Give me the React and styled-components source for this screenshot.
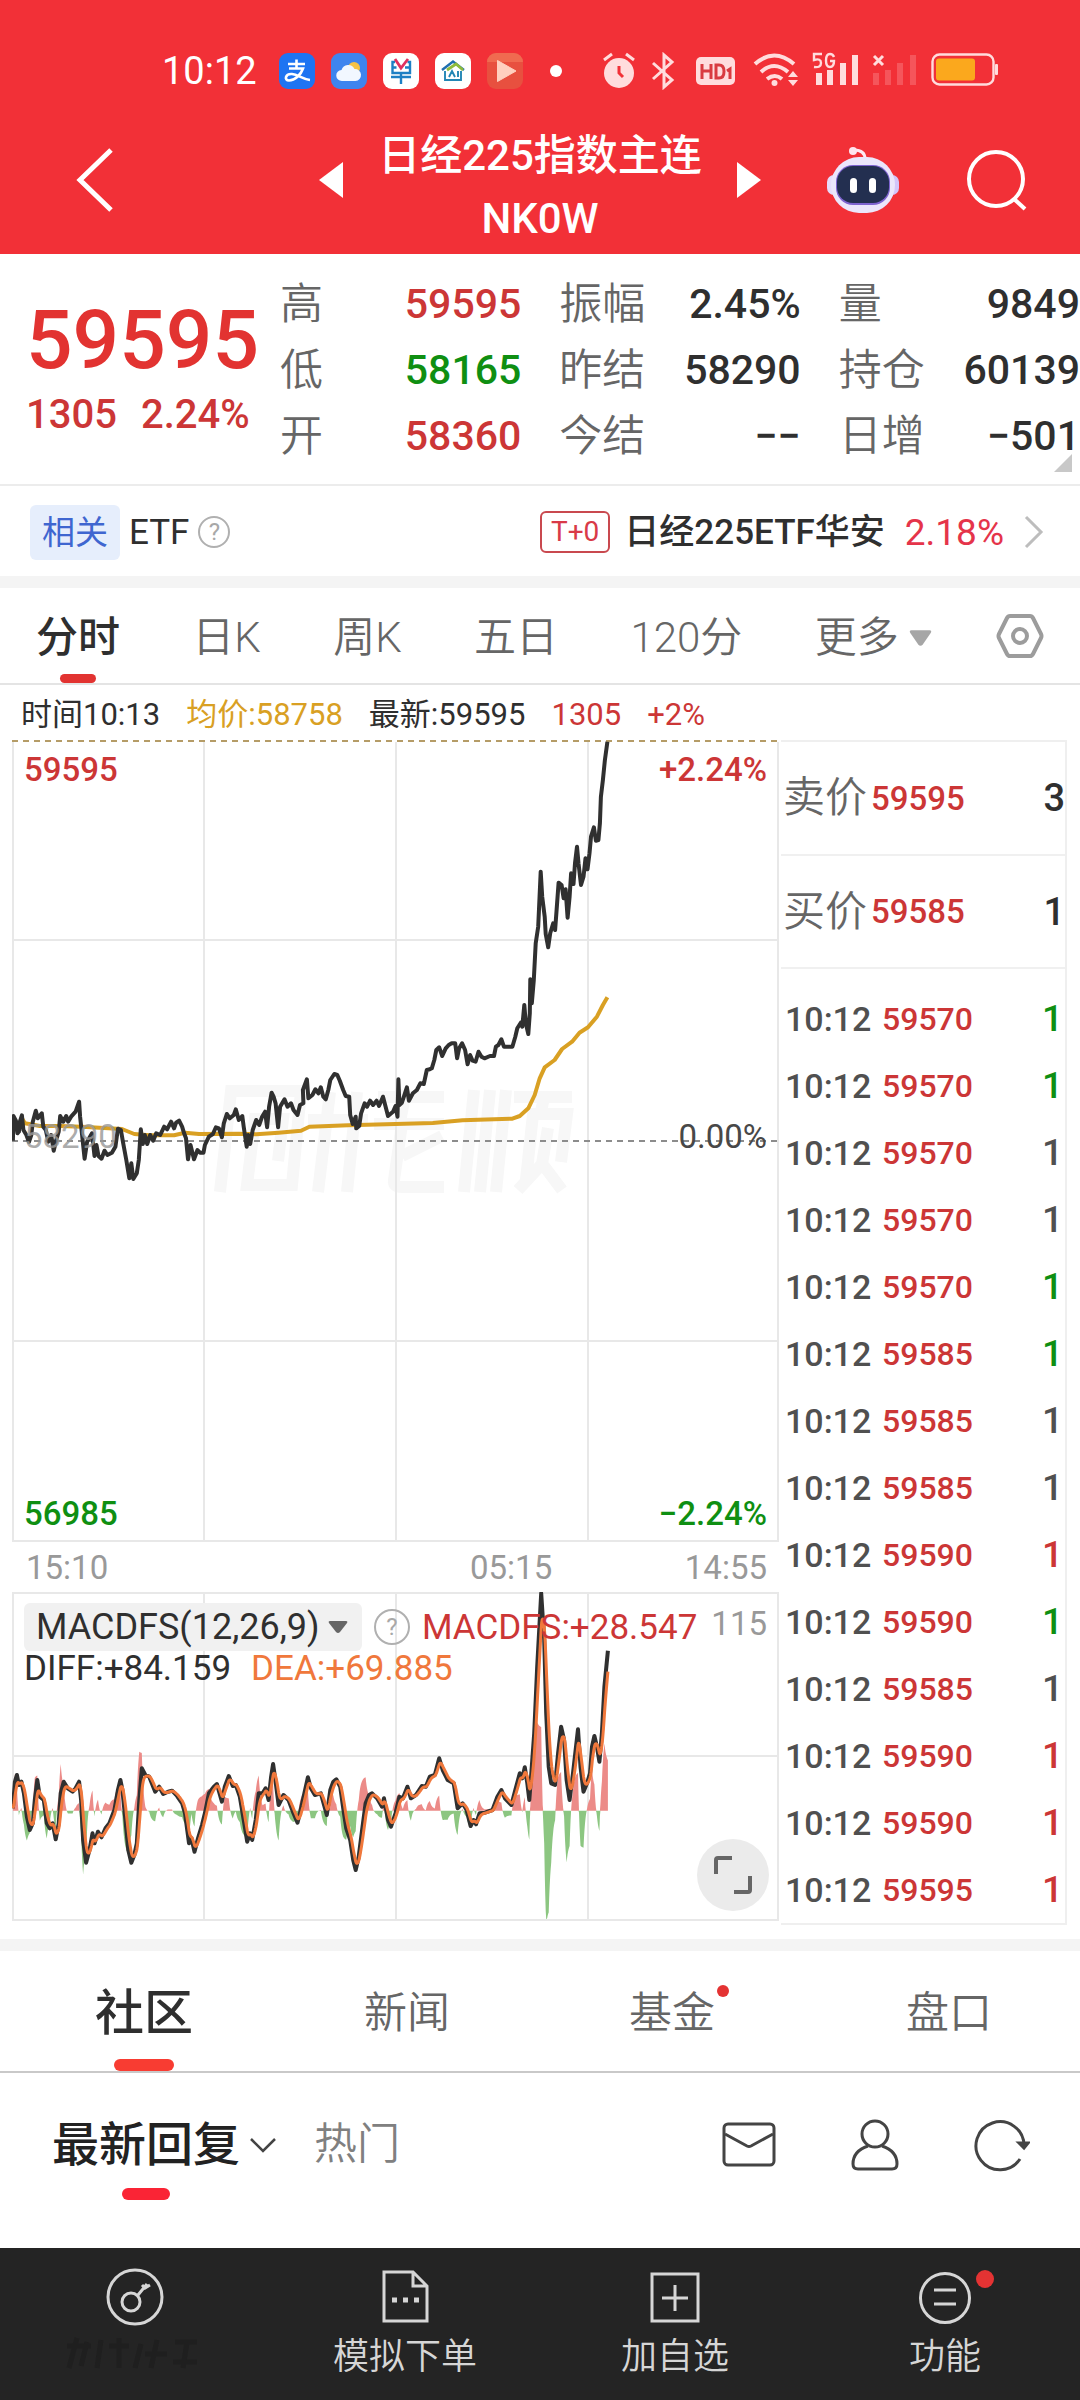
import React from "react";
import styled, { createGlobalStyle, css } from "styled-components";

const color = {
  brand: "#f23037",
  up: "#cc3636",
  upStrong: "#e23331",
  down: "#0f8f12",
  ink: "#2f2f2f",
  label: "#666666",
  time: "#505050",
  muted: "#999999",
  line: "#e8e8e8",
  avg: "#d9a023",
  dea: "#f0783c",
};

const GlobalStyle = createGlobalStyle`
  *, *::before, *::after { box-sizing: border-box; }
  body {
    margin: 0;
    background: #fff;
    color: ${color.ink};
    font-family: Roboto, "Noto Sans CJK SC", sans-serif;
    font-size: 42px;
    line-height: 1;
  }
  h1, p, dl, dd, dt { margin: 0; font-weight: inherit; font-size: inherit; }
  button, select {
    margin: 0;
    padding: 0;
    border: 0;
    background: none;
    font: inherit;
    color: inherit;
    white-space: nowrap;
    cursor: pointer;
  }
  a { color: inherit; text-decoration: none; }
  svg { display: block; flex: none; }
  table { border-collapse: collapse; }
`;

/* ---------- header ---------- */

const Header = styled.header`
  background: ${color.brand};
  color: #fff;
`;

const StatusBar = styled.div`
  display: flex;
  align-items: center;
  height: 106px;
  padding: 36px 82px 0 162px;
`;

const Clock = styled.time`
  width: 117px;
  font-size: 38px;
`;

const AppIcons = styled.div`
  display: flex;
  align-items: center;
  gap: 16px;
`;

const SystemIcons = styled.div`
  display: flex;
  align-items: center;
  margin-left: auto;
  color: #ffdcdd;
`;

const TitleBar = styled.div`
  display: grid;
  grid-template-columns: 1fr auto 1fr;
  align-items: center;
  height: 148px;
  padding: 0 52px;
`;

const BackButton = styled.button`
  justify-self: start;
  margin-left: 24px;
`;

const TitleGroup = styled.div`
  display: flex;
  align-items: center;
  gap: 34px;
`;

const Title = styled.h1`
  padding-top: 14px;
  font-size: 42px;
  font-weight: 500;
  line-height: 63px;
  text-align: center;
  span { display: block; }
`;

const TitleActions = styled.div`
  display: flex;
  align-items: center;
  justify-content: flex-end;
  gap: 67px;
`;

/* ---------- quote ---------- */

const Quote = styled.section`
  position: relative;
  display: flex;
  height: 232px;
  padding: 17px 0 0 26px;
  border-bottom: 2px solid #ececec;
`;

const QuoteMain = styled.div`
  width: 254px;
  padding-top: 27px;
  color: ${color.up};
`;

const Price = styled.p`
  font-size: 82px;
  font-weight: 500;
  line-height: 84px;
  color: ${color.upStrong};
`;

const Change = styled.p`
  display: flex;
  gap: 24px;
  font-size: 40px;
  font-weight: 500;
  line-height: 66px;
`;

const Stats = styled.dl`
  flex: 1;
  display: grid;
  grid-template-columns: repeat(3, 1fr);
  column-gap: 38px;
  grid-auto-rows: 66px;
`;

const Stat = styled.div`
  display: flex;
  align-items: center;
  justify-content: space-between;
  dt { font-size: 43px; font-weight: 350; color: ${color.label}; }
  dd { font-size: 41px; font-weight: 500; color: ${(p) => p.$tone || color.ink}; }
`;

const Corner = styled.svg`
  position: absolute;
  right: 8px;
  bottom: 12px;
`;

/* ---------- related etf ---------- */

const Related = styled.section`
  display: flex;
  align-items: center;
  justify-content: space-between;
  height: 90px;
  padding: 2px 36px 0 30px;
  font-size: 35px;
`;

const RelatedLabel = styled.div`
  display: flex;
  align-items: center;
  gap: 9px;
`;

const Badge = styled.span`
  padding: 11px 12px;
  border-radius: 6px;
  background: #e6eefc;
  color: #3f66d0;
  font-size: 33px;
`;

const HelpButton = styled.button`
  width: ${(p) => p.$size}px;
  height: ${(p) => p.$size}px;
  border: 2px solid #b0b0b0;
  border-radius: 50%;
  color: #a8a8a8;
  font-size: 24px;
  line-height: 1;
`;

const RelatedLink = styled.a`
  display: flex;
  align-items: center;
  font-weight: 500;
  em {
    margin-left: 20px;
    font-style: normal;
    font-weight: 400;
    font-size: 37px;
    color: #e5344a;
  }
  svg { margin-left: 20px; }
`;

const Tag = styled.span`
  margin-right: 14px;
  padding: 4px 9px;
  border: 2px solid #c9494f;
  border-radius: 6px;
  color: #d93a48;
  font-size: 28px;
  line-height: 30px;
  font-weight: 400;
`;

const Band = styled.div`
  height: 12px;
  background: #f4f4f4;
`;

/* ---------- chart tabs ---------- */

const underline = css`
  &::after {
    content: "";
    position: absolute;
    left: 50%;
    bottom: ${(p) => p.$bottom || 0}px;
    width: ${(p) => p.$bar}px;
    height: ${(p) => p.$thick || 12}px;
    border-radius: 6px;
    background: ${(p) => p.$barColor || color.upStrong};
    transform: translateX(-50%);
  }
`;

const Tab = styled.button`
  position: relative;
  display: flex;
  align-items: center;
  gap: 10px;
  padding-top: 4px;
  font-size: 42px;
  font-weight: ${(p) => (p.$active ? 500 : 350)};
  color: ${(p) => (p.$active ? color.ink : color.label)};
  ${(p) => p.$active && underline}
`;

const ChartTabs = styled.nav`
  display: flex;
  align-items: stretch;
  justify-content: space-between;
  height: 97px;
  padding: 0 36px;
  border-bottom: 2px solid #e4e4e4;
  color: ${color.label};
  ${Tab}:last-child { margin-left: -8px; padding-top: 0; }
`;

/* ---------- charts ---------- */

const InfoLine = styled.div`
  display: flex;
  align-items: center;
  gap: 26px;
  height: 55px;
  padding: 4px 21px 0;
  font-size: 31px;
`;

const Tone = styled.span`
  color: ${(p) => p.$c};
`;

const ChartArea = styled.section`
  display: flex;
  align-items: flex-start;
  gap: 2px;
  padding: 0 13px 14px 12px;
`;

const Charts = styled.div`
  flex: 1;
  min-width: 0;
`;

const Plot = styled.figure`
  position: relative;
  margin: 0;
  & > svg { width: 100%; height: auto; }
`;

const AxisLabel = styled.span`
  position: absolute;
  ${(p) => (p.$right ? "right: 12px;" : "left: 12px;")}
  ${(p) => (p.$bottom ? "bottom: 12px;" : `top: ${p.$top || "14px"};`)}
  font-size: 33px;
  font-weight: 500;
  line-height: 32px;
  color: ${(p) => p.$c};
  ${(p) => p.$middle && "font-weight: 400; transform: translateY(-50%);"}
`;

const TimeAxis = styled.div`
  display: grid;
  grid-template-columns: 444px 1fr auto;
  align-items: center;
  height: 50px;
  padding: 0 12px 0 14px;
  color: ${color.muted};
  font-size: 33px;
`;

const Legend = styled.figcaption`
  position: absolute;
  inset: 11px 12px auto 12px;
  font-size: 35px;
`;

const LegendRow = styled.div`
  display: flex;
  align-items: center;
  gap: ${(p) => p.$gap}px;
`;

const IndicatorSelect = styled.label`
  display: flex;
  align-items: center;
  height: 48px;
  padding: 0 14px 0 12px;
  border-radius: 6px;
  background: #f1f1f1;
  select {
    appearance: none;
    color: ${color.ink};
    font-size: 36px;
    line-height: 48px;
    padding-right: 8px;
    outline: none;
  }
`;

const ScaleMax = styled.span`
  margin-left: auto;
  align-self: flex-start;
  font-size: 33px;
  line-height: 42px;
  color: ${color.muted};
`;

const ExpandButton = styled.button`
  position: absolute;
  right: 10px;
  bottom: 10px;
  display: grid;
  place-items: center;
  width: 72px;
  height: 72px;
  border-radius: 50%;
  background: #ebebeb;
`;

/* ---------- order book ---------- */

const Book = styled.aside`
  width: 286px;
  border: 2px solid #efefef;
  border-left: 0;
`;

const BookTable = styled.table`
  width: 100%;
  td, th { padding: 0; text-align: left; }
  td:last-child { text-align: right; }
`;

const BestRow = styled.tr`
  height: 113px;
  border-bottom: 2px solid #f0f0f0;
  th { width: 90px; padding-left: 2px; font-size: 42px; font-weight: 350; color: ${color.label}; white-space: nowrap; }
  td { font-size: 33px; font-weight: 500; color: ${color.up}; }
  td:last-child { font-size: 38px; color: ${color.ink}; }
`;

const Trades = styled.div`
  padding-top: 16px;
`;

const TradeRow = styled.tr`
  height: 67px;
  td { font-size: 32px; font-weight: 500; color: ${color.up}; }
  td:first-child { width: 101px; padding-left: 4px; font-size: 34px; color: ${color.time}; }
  td:last-child { padding-right: 2px; font-size: 37px; color: ${(p) => p.$c}; }
`;

/* ---------- community ---------- */

const SectionTabs = styled.nav`
  display: grid;
  grid-template-columns: 288fr 238fr 292fr 262fr;
  height: 122px;
  border-bottom: 2px solid #c9c9c9;
`;

const SectionTab = styled.button`
  position: relative;
  padding-top: 4px;
  font-size: ${(p) => (p.$active ? 49 : 43)}px;
  font-weight: ${(p) => (p.$active ? 500 : 350)};
  color: ${(p) => (p.$active ? color.ink : color.label)};
  ${(p) => p.$active && underline}
`;

const Dotted = styled.span`
  position: relative;
  &::after {
    content: "";
    position: absolute;
    top: ${(p) => p.$top}px;
    right: ${(p) => p.$right}px;
    width: ${(p) => p.$size}px;
    height: ${(p) => p.$size}px;
    border-radius: 50%;
    background: #e43333;
  }
`;

const Filters = styled.div`
  display: flex;
  align-items: center;
  height: 175px;
  padding: 0 50px 32px 52px;
`;

const Filter = styled.button`
  position: relative;
  display: flex;
  align-items: center;
  gap: 10px;
  margin-right: 38px;
  font-size: ${(p) => (p.$active ? 47 : 43)}px;
  font-weight: ${(p) => (p.$active ? 500 : 350)};
  color: ${(p) => (p.$active ? "#222" : "#808080")};
`;

const FilterText = styled.span`
  position: relative;
  ${underline}
`;

const FilterActions = styled.div`
  display: flex;
  align-items: center;
  gap: 74px;
  margin-left: auto;
`;

const BottomNav = styled.nav`
  display: grid;
  grid-template-columns: repeat(4, 1fr);
  height: 153px;
  background: #242424;
  color: #d6d6d6;
  font-size: 36px;
  font-weight: 350;
`;

const NavItem = styled.a`
  display: flex;
  flex-direction: column;
  align-items: center;
  padding-top: 20px;
  gap: 8px;
  line-height: 46px;
`;

/* ---------- data ---------- */

const parse = (text) =>
  text.trim().split(/\s+/).map((pair) => pair.split(",").map(Number));

const priceSeries = parse(`
26,1232 27,1158 32,1172 35,1210 38,1205 40,1175 44,1156 47,1200 53,1215 58,1236 63,1215 66,1175 72,1142 76,1165
84,1150 87,1190 92,1200 97,1235 103,1215 108,1262 113,1230 118,1205 121,1158 127,1175 133,1158 137,1175 143,1160
152,1145 159,1115 161,1160 165,1215 170,1286 175,1235 185,1210 190,1278 194,1245 198,1278 204,1286 210,1262
216,1275 225,1268 232,1250 237,1196 243,1200 247,1235 254,1290 260,1345 264,1300 268,1347 275,1330 279,1290
283,1198 287,1242 291,1215 296,1242 302,1215 308,1232 314,1210 322,1215 330,1190 336,1198 344,1175 350,1195
354,1178 360,1172 366,1190 370,1210 374,1225 378,1288 383,1245 390,1288 397,1260 402,1268 409,1268 412,1245
420,1220 428,1212 434,1192 440,1195 446,1222 450,1180 456,1152 462,1165 470,1155 474,1138 480,1170 487,1158
490,1190 496,1250 499,1215 503,1242 508,1200 515,1170 521,1185 527,1160 533,1145 537,1192 541,1130 546,1088
550,1100 554,1120 559,1192 563,1130 572,1108 578,1130 585,1120 590,1140 598,1155 603,1125 610,1120 609,1080
617,1048 620,1105 628,1095 634,1078 640,1090 645,1072 650,1100 655,1108 660,1080 664,1050 672,1032 678,1035
683,1052 690,1080 695,1098 702,1100 704,1155 709,1182 715,1160 716,1195 722,1188 726,1150 733,1120 738,1130
744,1112 750,1125 757,1112 762,1128 770,1100 776,1135 780,1158 790,1145 795,1128 799,1160 801,1048 803,1125
808,1118 812,1100 818,1072 822,1112 830,1090 838,1080 845,1060 852,1062 858,1020 864,1018 868,1015 873,990
877,960 883,952 889,978 896,955 902,945 908,940 915,940 919,985 923,955 929,940 935,960 940,1003 945,975
950,992 956,995 962,965 968,980 974,985 985,978 993,978 997,950 1002,945 1008,928 1013,950 1030,950 1036,920
1040,895 1047,878 1050,890 1054,825 1057,880 1062,912 1065,850 1066,748 1069,820 1073,750 1077,640 1082,590
1087,425 1090,500 1095,560 1097,612 1102,652 1106,610 1112,580 1116,600 1119,540 1123,458 1129,465 1133,505
1137,478 1141,563 1145,500 1148,430 1153,462 1156,400 1160,350 1163,400 1168,465 1173,440 1177,385 1181,418
1185,370 1188,320 1194,292 1198,332 1203,330 1206,280 1208,200 1212,150 1216,90 1221,35`);

const averageSeries = parse(`
44,1165 50,1180 80,1188 120,1188 165,1190 200,1193 245,1197 270,1212 300,1216 350,1216 372,1208 400,1212 480,1211
515,1213 560,1208 605,1202 622,1190 700,1186 795,1182 870,1179 930,1171 1030,1166 1045,1158 1062,1135 1075,1095
1085,1045 1095,1012 1115,990 1130,957 1150,935 1165,908 1182,892 1200,860 1212,825 1221,802`);

const diffSeries = parse(`
26,985 30,905 34,885 38,915 43,905 48,940 54,1010 60,1050 66,1030 70,960 75,900 80,950 88,960 94,1030 100,1045
106,1030 112,1078 118,1030 122,940 128,905 136,925 146,935 152,925 159,905 163,960 167,1080 173,1148 180,1110
186,1060 190,1090 197,1055 204,1072 212,1045 220,1030 230,990 237,930 242,900 246,930 252,1020 258,1110 264,1148
270,1125 275,1090 280,960 285,865 292,885 300,890 312,935 320,920 328,942 338,935 346,932 356,948 366,970
372,1000 380,1090 385,1075 391,1115 398,1075 406,1035 412,1000 420,940 430,920 436,912 446,965 452,920 460,888
468,918 474,915 482,950 490,1020 497,1085 503,1060 507,1080 514,1020 520,940 528,940 534,925 540,960 545,890
549,852 554,905 560,975 570,945 580,960 590,1000 598,1028 606,980 612,940 619,892 625,925 633,945 645,940
657,1005 664,930 670,905 676,898 684,920 690,985 696,1045 704,1080 710,1140 715,1170 721,1130 728,1050 735,970
742,945 748,940 758,955 768,980 772,955 780,1020 786,1040 795,1000 803,950 810,955 819,920 826,955 836,945
848,918 856,920 864,890 874,885 883,835 890,870 900,900 912,910 920,985 930,970 938,990 946,1038 952,1020
957,1033 964,1000 975,998 990,990 1000,950 1008,930 1015,955 1028,975 1036,930 1045,880 1050,895 1055,862
1060,910 1064,960 1068,880 1074,760 1080,560 1088,340 1094,480 1098,700 1103,860 1108,910 1116,915 1122,820
1128,740 1134,780 1139,900 1145,960 1152,880 1158,800 1162,748 1167,860 1173,935 1180,910 1186,880 1190,800
1195,768 1200,800 1205,845 1210,760 1215,620 1222,512`);

const X_UNIT = 2.0103;
const Y_UNIT = 3;
const toPoints = (series, yShift) =>
  series
    .map(([x, y]) => `${(x / X_UNIT - 12).toFixed(1)},${(y / Y_UNIT - yShift).toFixed(1)}`)
    .join(" ");

const ZERO = 992;

function deriveMacd(series) {
  const dea = [];
  const bars = [];
  let slow = series[0][1];
  let i = 0;
  for (let x = series[0][0]; x <= series[series.length - 1][0]; x += 1) {
    while (i < series.length - 2 && series[i + 1][0] <= x) i += 1;
    const [x0, y0] = series[i];
    const [x1, y1] = series[i + 1];
    const y = y0 + ((y1 - y0) * (x - x0)) / (x1 - x0);
    slow += (y - slow) * 0.21;
    dea.push([x, slow]);
    bars.push([x, Math.max(-330, Math.min(325, (y - slow) * 2.4))]);
  }
  const area = (keep) => [
    [bars[0][0], ZERO],
    ...bars.map(([x, v]) => [x, ZERO + (keep(v) ? v : 0)]),
    [bars[bars.length - 1][0], ZERO],
  ];
  return { dea, rise: area((v) => v < 0), fall: area((v) => v > 0) };
}

const macd = deriveMacd(diffSeries);

const stats = [
  ["高", "59595", color.up],
  ["振幅", "2.45%"],
  ["量", "9849"],
  ["低", "58165", color.down],
  ["昨结", "58290"],
  ["持仓", "60139"],
  ["开", "58360", color.up],
  ["今结", "--"],
  ["日增", "-501"],
];

const trades = [
  ["59570", color.down],
  ["59570", color.down],
  ["59570", color.time],
  ["59570", color.time],
  ["59570", color.down],
  ["59585", color.down],
  ["59585", color.time],
  ["59585", color.time],
  ["59590", color.up],
  ["59590", color.down],
  ["59585", color.time],
  ["59590", color.up],
  ["59590", color.up],
  ["59595", color.up],
];

/* ---------- icons ---------- */

const AppTile = ({ fill, children }) => (
  <svg width="36" height="36" viewBox="0 0 36 36" fill="none" aria-hidden="true">
    <rect width="36" height="36" rx="9" fill={fill} />
    {children}
  </svg>
);

const StatusApps = () => (
  <AppIcons>
    <AppTile fill="#1e74f2">
      <path d="M9 11h17M17.500 6.500v9M10 15.500h14c-2 6-8 12-14 12-5 0-4-7 3-6.500 6 .5 10 5 18 6" stroke="#fff" strokeWidth="2.600" />
    </AppTile>
    <AppTile fill="#3f84ee">
      <circle cx="23" cy="15" r="6" fill="#f7c244" />
      <path d="M11 28a5.500 5.500 0 0 1-.5-11 7 7 0 0 1 13-1 6 6 0 0 1 1 12z" fill="#f2f7ff" />
    </AppTile>
    <AppTile fill="#fff">
      <path d="M12 9H9.500v11H27V9h-2.500M9.500 14.500h4M22 14.500h5M8 24h20M18 20v11" stroke="#1d7fc4" strokeWidth="2.400" />
      <path d="m12 6 6 9 7-9" stroke="#e0315f" strokeWidth="2.800" />
    </AppTile>
    <AppTile fill="#fff">
      <path d="M7 17 18 8.500 29 17" stroke="#1f6fb0" strokeWidth="2.400" />
      <path d="m12 17 9-6 7 6" stroke="#8fbb3b" strokeWidth="2.800" />
      <path d="M10 18v9h16v-9M14 24l3-6 3 6M23 18v6" stroke="#2386b5" strokeWidth="1.900" />
    </AppTile>
    <AppTile fill="#e8503f">
      <path d="M0 9a9 9 0 0 1 9-9h18a9 9 0 0 1 9 9z" fill="#f06a50" />
      <path d="M10.500 7.500 29 18 10.500 28.500z" fill="#ffd0bf" stroke="#ffd0bf" strokeLinejoin="round" />
    </AppTile>
    <svg width="44" height="12" viewBox="0 0 44 12" aria-hidden="true">
      <circle cx="17" cy="6" r="6" fill="#fff" />
    </svg>
  </AppIcons>
);

const StatusSystem = () => (
  <SystemIcons>
    <svg width="398" height="38" viewBox="0 0 398 38" fill="currentColor" aria-hidden="true">
      <circle cx="19" cy="21" r="15" />
      <path d="m4 8 8-6M34 8l-8-6" stroke="currentColor" strokeWidth="3" />
      <path d="M19 14v7l4 4" stroke={color.brand} strokeWidth="3" fill="none" />
      <path d="m53 11 19 17-8 7V3l8 7-19 17" stroke="currentColor" strokeWidth="3" fill="none" />
      <rect x="96" y="5" width="39" height="28" rx="5" />
      <path d="M102 12v15M111 12v15M102 19h9M116 13h3q5 0 5 6.500t-5 6.500h-3zM127 19l3-2v10" stroke="#d93b40" strokeWidth="3" fill="none" />
      <g stroke="currentColor" strokeWidth="4" fill="none">
        <path d="M155 12q19-17 39 0M161 20q13-12 27 0M167 27q8-6 15 0" />
      </g>
      <circle cx="174.500" cy="31" r="3" />
      <path d="m188 25 5-6 5 6zM188 28l5 6 5-6z" />
      <path d="M222 2h-8v6q7-2 7 3t-7 4M234 5q-1-3-4-3-4 0-4 6.500t4 6.500q4 0 4-6h-4" stroke="currentColor" strokeWidth="2.400" fill="none" />
      <path d="M216 21h6v12h-6zM227 18h6v15h-6zM240 11h6v22h-6zM252 3h6v30h-6z" />
      <path d="m274 4 9 9M283 4l-9 9" stroke="currentColor" strokeWidth="3" />
      <path opacity=".22" d="M273 21h6v12h-6zM285 18h6v15h-6zM297 11h6v22h-6zM310 3h6v30h-6z" />
      <rect x="332.500" y="2.500" width="61" height="30" rx="7" fill="none" stroke="currentColor" strokeWidth="2.400" />
      <rect x="336" y="6.500" width="39" height="22" rx="3" fill="#fba81d" />
      <rect x="395" y="12" width="3" height="11" rx="1" />
    </svg>
  </SystemIcons>
);

const Robot = () => (
  <svg width="72" height="68" viewBox="0 0 72 68" aria-hidden="true">
    <path d="M27 4q11 0 11 9" stroke="#ffe9f2" strokeWidth="3" fill="none" />
    <circle cx="26" cy="5" r="4" fill="#ffe4ee" />
    <rect x="0" y="29" width="16" height="20" rx="7" fill="#e6dcfb" />
    <rect x="56" y="29" width="16" height="20" rx="7" fill="#d3c5fa" />
    <rect x="4" y="11" width="64" height="56" rx="28" fill="#ebe6fb" />
    <rect x="9" y="19" width="54" height="40" rx="17" fill="#7d63cf" />
    <rect x="10" y="20" width="52" height="37" rx="16" fill="#232f50" />
    <rect x="23" y="32" width="7" height="15" rx="3.500" fill="#fff" />
    <rect x="42" y="32" width="7" height="15" rx="3.500" fill="#fff" />
  </svg>
);

const CaretDown = ({ w, h, fill }) => (
  <svg width={w} height={h} viewBox="0 0 20 14" preserveAspectRatio="none" aria-hidden="true">
    <path d="M2 1h16q2 0 1 2l-7 9q-2 2-4 0L1 3Q0 1 2 1z" fill={fill} />
  </svg>
);

const Grid = ({ height, mid }) => (
  <g fill="none" stroke={color.line} strokeWidth="2">
    <path d={`M1 1H766V${height - 1}H1zM192 1V${height}M384 1V${height}M576 1V${height}`} />
    {mid.map((y) => (
      <path key={y} d={`M1 ${y}H766`} />
    ))}
  </g>
);

/* ---------- page ---------- */

const PriceChart = () => (
  <Plot>
    <svg viewBox="0 0 767 802" fill="none" role="img" aria-label="分时走势">
      <g stroke="#f7f7f7" strokeWidth="12">
        <path d="M208 452l11-101h70l-9 94h-45l8-66h28l-5 42" />
        <path d="M296 380h42M318 352l-12 100M345 352l-10 100M330 380h26" />
        <path d="M366 357h66M394 350l-6 32M362 384h70M390 384l-8 56q-1 7 8 7h42M430 396l-40 20" />
        <path d="M462 350l-10 102M478 350l-10 102M494 350l-10 102M502 357h58M532 357l-4 20M514 440l7-66h34l-6 48M536 388l-6 36-24 26M532 426l18 24" />
      </g>
      <Grid height={802} mid={[200, 601]} />
      <path d="M0 1H767" stroke="#fff" strokeWidth="2" />
      <path d="M0 1H767" stroke="#b59c67" strokeWidth="2" strokeDasharray="6 5" />
      <path d="M0 401H767" stroke="#8c8c8c" strokeWidth="2" strokeDasharray="6 5" />
      <polyline points={toPoints(averageSeries, 10)} stroke={color.avg} strokeWidth="4" strokeLinejoin="round" />
      <polyline points={toPoints(priceSeries, 10)} stroke="#303030" strokeWidth="4" strokeLinejoin="round" />
    </svg>
    <AxisLabel $c={color.up}>59595</AxisLabel>
    <AxisLabel $c={color.up} $right>+2.24%</AxisLabel>
    <AxisLabel $c="#999999d0" $top="397px" $middle>58290</AxisLabel>
    <AxisLabel $c="#484848" $top="397px" $middle $right>0.00%</AxisLabel>
    <AxisLabel $c={color.down} $bottom>56985</AxisLabel>
    <AxisLabel $c={color.down} $bottom $right>−2.24%</AxisLabel>
  </Plot>
);

const MacdChart = () => (
  <Plot>
    <Legend>
      <LegendRow $gap={12}>
        <IndicatorSelect>
          <select aria-label="指标" defaultValue="macdfs">
            <option value="macdfs">MACDFS(12,26,9)</option>
          </select>
          <CaretDown w={20} h={14} fill="#666" />
        </IndicatorSelect>
        <HelpButton $size={36} type="button" aria-label="指标说明">?</HelpButton>
        <Tone $c={color.up}>MACDFS:+28.547</Tone>
        <ScaleMax>115</ScaleMax>
      </LegendRow>
      <LegendRow $gap={20}>
        <span>DIFF:+84.159</span>
        <Tone $c={color.dea}>DEA:+69.885</Tone>
      </LegendRow>
    </Legend>
    <svg viewBox="0 0 767 329" fill="none" role="img" aria-label="MACD">
      <Grid height={329} mid={[164]} />
      <polygon points={toPoints(macd.rise, 112)} fill="#ec8b88" />
      <polygon points={toPoints(macd.fall, 112)} fill="#8cc681" />
      <polyline points={toPoints(diffSeries, 112)} stroke="#303030" strokeWidth="4" strokeLinejoin="round" />
      <polyline points={toPoints(macd.dea, 112)} stroke={color.dea} strokeWidth="3" strokeLinejoin="round" />
    </svg>
    <ExpandButton type="button" aria-label="全屏">
      <svg width="38" height="38" viewBox="0 0 38 38" fill="none" stroke="#666" strokeWidth="4" aria-hidden="true">
        <path d="M2 18V4q0-2 2-2h14M36 20v14q0 2-2 2H20" />
      </svg>
    </ExpandButton>
  </Plot>
);

export default function App() {
  return (
    <>
      <GlobalStyle />
      <Header>
        <StatusBar>
          <Clock>10:12</Clock>
          <StatusApps />
          <StatusSystem />
        </StatusBar>
        <TitleBar>
          <BackButton type="button" aria-label="返回">
            <svg width="38" height="64" viewBox="0 0 38 64" fill="none" stroke="#fff" strokeWidth="5" aria-hidden="true">
              <path d="M35 2 4 32l31 30" />
            </svg>
          </BackButton>
          <TitleGroup>
            <button type="button" aria-label="上一个">
              <svg width="26" height="36" viewBox="0 0 26 36" aria-hidden="true"><path d="M25 0v36L1 18z" fill="#fff" /></svg>
            </button>
            <Title>日经225指数主连<span>NK0W</span></Title>
            <button type="button" aria-label="下一个">
              <svg width="26" height="36" viewBox="0 0 26 36" aria-hidden="true"><path d="M1 0v36l24-18z" fill="#fff" /></svg>
            </button>
          </TitleGroup>
          <TitleActions>
            <button type="button" aria-label="智能助手"><Robot /></button>
            <button type="button" aria-label="搜索">
              <svg width="62" height="62" viewBox="0 0 62 62" fill="none" stroke="#fff" strokeWidth="4" aria-hidden="true">
                <circle cx="30" cy="30" r="27" />
                <path d="m48 50 11 10" />
              </svg>
            </button>
          </TitleActions>
        </TitleBar>
      </Header>

      <main>
        <Quote>
          <QuoteMain>
            <Price>59595</Price>
            <Change><span>1305</span><span>2.24%</span></Change>
          </QuoteMain>
          <Stats>
            {stats.map(([name, value, tone]) => (
              <Stat key={name} $tone={tone}>
                <dt>{name}</dt>
                <dd>{value.replace(/-/g, "−")}</dd>
              </Stat>
            ))}
          </Stats>
          <Corner width="18" height="18" viewBox="0 0 18 18" aria-hidden="true">
            <path d="M18 0v18H0z" fill="#c8c8c8" />
          </Corner>
        </Quote>

        <Related>
          <RelatedLabel>
            <Badge>相关</Badge>
            <span>ETF</span>
            <HelpButton $size={32} type="button" aria-label="ETF说明">?</HelpButton>
          </RelatedLabel>
          <RelatedLink href="#etf">
            <Tag>T+0</Tag>日经225ETF华安<em>2.18%</em>
            <svg width="20" height="34" viewBox="0 0 20 34" fill="none" stroke="#bdbdbd" strokeWidth="3" aria-hidden="true">
              <path d="m2 2 15 15L2 32" />
            </svg>
          </RelatedLink>
        </Related>
        <Band />

        <ChartTabs>
          <Tab type="button" $active $bar={36} $thick={9}>分时</Tab>
          <Tab type="button">日K</Tab>
          <Tab type="button">周K</Tab>
          <Tab type="button">五日</Tab>
          <Tab type="button">120分</Tab>
          <Tab type="button" aria-haspopup="menu">更多<CaretDown w={23} h={18} fill="#a6a6a6" /></Tab>
          <Tab type="button" aria-label="设置">
            <svg width="48" height="46" viewBox="0 0 48 46" fill="none" stroke="#9c9c9c" strokeWidth="4" strokeLinejoin="round" aria-hidden="true">
              <path d="M14 3h20q2 0 3 2l8 16q1 2 0 4l-8 16q-1 2-3 2H14q-2 0-3-2L3 25q-1-2 0-4l8-16q1-2 3-2z" />
              <circle cx="24" cy="23" r="7" />
            </svg>
          </Tab>
        </ChartTabs>

        <InfoLine>
          <span>时间10:13</span>
          <Tone $c={color.avg}>均价:58758</Tone>
          <span>最新:59595</span>
          <Tone $c={color.up}>1305</Tone>
          <Tone $c={color.up}>+2%</Tone>
        </InfoLine>

        <ChartArea>
          <Charts>
            <PriceChart />
            <TimeAxis>
              <span>15:10</span>
              <span>05:15</span>
              <span>14:55</span>
            </TimeAxis>
            <MacdChart />
          </Charts>
          <Book>
            <BookTable>
              <tbody>
                <BestRow><th scope="row">卖价</th><td>59595</td><td>3</td></BestRow>
                <BestRow><th scope="row">买价</th><td>59585</td><td>1</td></BestRow>
              </tbody>
            </BookTable>
            <Trades>
              <BookTable>
                <tbody>
                  {trades.map(([price, tone], i) => (
                    <TradeRow key={i} $c={tone}><td>10:12</td><td>{price}</td><td>1</td></TradeRow>
                  ))}
                </tbody>
              </BookTable>
            </Trades>
          </Book>
        </ChartArea>
        <Band />

        <SectionTabs>
          <SectionTab type="button" $active $bar={60} $barColor="#f83c32">社区</SectionTab>
          <SectionTab type="button">新闻</SectionTab>
          <SectionTab type="button"><Dotted $top={-3} $right={-14} $size={12}>基金</Dotted></SectionTab>
          <SectionTab type="button">盘口</SectionTab>
        </SectionTabs>

        <Filters>
          <Filter type="button" $active>
            <FilterText $bar={48} $bottom={-32} $barColor="#fa2435">最新回复</FilterText>
            <svg width="26" height="16" viewBox="0 0 26 16" fill="none" stroke="#444" strokeWidth="2.500" aria-hidden="true">
              <path d="m1 2 12 12L25 2" />
            </svg>
          </Filter>
          <Filter type="button">热门</Filter>
          <FilterActions>
            <button type="button" aria-label="消息">
              <svg width="54" height="46" viewBox="0 0 54 46" fill="none" stroke="#444" strokeWidth="3" strokeLinejoin="round" aria-hidden="true">
                <rect x="2" y="2" width="50" height="41" rx="4" />
                <path d="m3 12 22 12q2 1 4 0l22-12" />
              </svg>
            </button>
            <button type="button" aria-label="我的">
              <svg width="50" height="52" viewBox="0 0 50 52" fill="none" stroke="#444" strokeWidth="3" aria-hidden="true">
                <circle cx="25" cy="15" r="13" />
                <path d="M18 27Q3 32 3 45q0 5 5 5h34q5 0 5-5 0-13-15-18" />
              </svg>
            </button>
            <button type="button" aria-label="刷新">
              <svg width="56" height="54" viewBox="0 0 56 54" fill="none" stroke="#444" strokeWidth="3" aria-hidden="true">
                <path d="M50 28A24 24 0 1 0 46 41" />
                <path d="m45 25 5 5 4-5z" fill="#444" />
              </svg>
            </button>
          </FilterActions>
        </Filters>
      </main>

      <BottomNav>
        <NavItem href="#trade" aria-label="交易">
          <svg width="58" height="58" viewBox="0 0 58 58" fill="none" stroke="currentColor" strokeWidth="3" aria-hidden="true">
            <circle cx="29" cy="29" r="27" />
            <circle cx="25" cy="34" r="9" />
            <path d="m32 27 9-11M36 17l3 3 5-3" />
          </svg>
          <svg width="144" height="38" viewBox="0 0 144 38" fill="none" stroke="#1f1f1f" strokeWidth="5" aria-hidden="true">
            <path d="M4 12h24M14 4 6 34M24 8l-6 24M38 6l-4 28M46 12h20M56 4v30M78 10l-6 24M82 20h22M94 6l-6 28M112 8h22M124 8l-4 26M110 28h24" />
          </svg>
        </NavItem>
        <NavItem href="#simulate">
          <svg width="50" height="58" viewBox="0 0 50 58" fill="none" stroke="currentColor" strokeWidth="3" aria-hidden="true">
            <path d="M4 4h29l14 14v35H4zM33 4v14h14" />
            <path d="M12 32h5M23 32h5M34 32h5" strokeWidth="5" />
          </svg>
          模拟下单
        </NavItem>
        <NavItem href="#watch">
          <svg width="50" height="58" viewBox="0 0 50 58" fill="none" stroke="currentColor" strokeWidth="3" aria-hidden="true">
            <path d="M2 6h46v47H2zM12 30h26M25 17v26" />
          </svg>
          加自选
        </NavItem>
        <NavItem href="#features">
          <Dotted $top={2} $right={-23} $size={18}>
            <svg width="52" height="58" viewBox="0 0 52 58" fill="none" stroke="currentColor" strokeWidth="3" aria-hidden="true">
              <circle cx="26" cy="30" r="24.500" />
              <path d="M15 22h22M15 36h22" />
            </svg>
          </Dotted>
          功能
        </NavItem>
      </BottomNav>
    </>
  );
}
